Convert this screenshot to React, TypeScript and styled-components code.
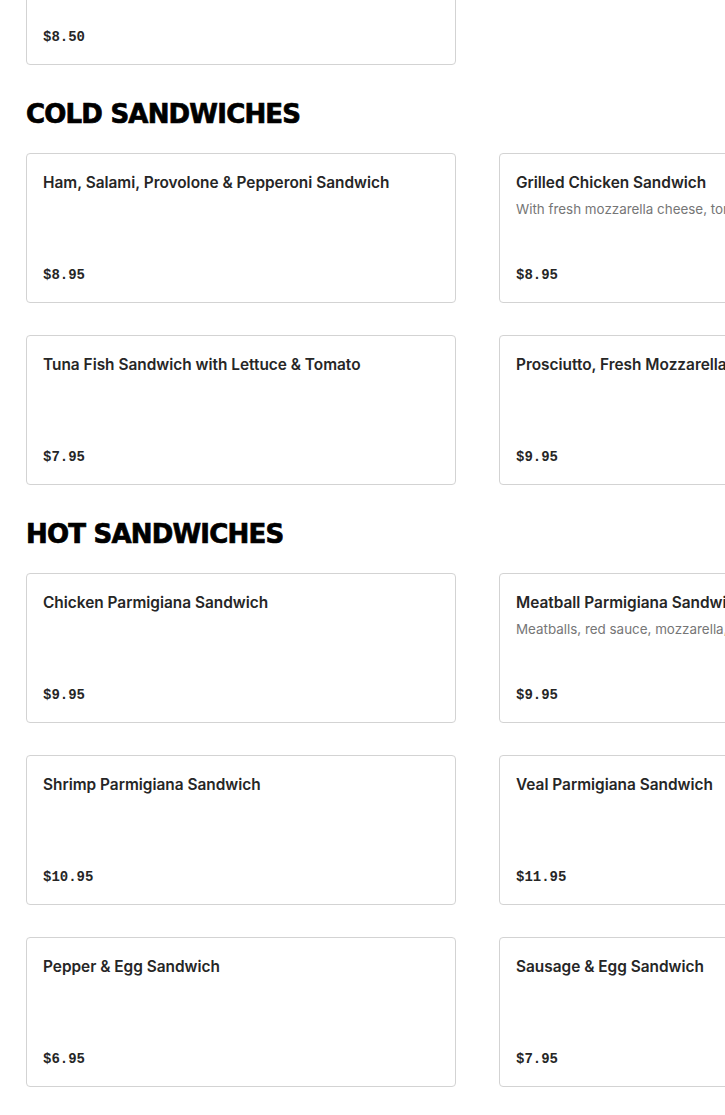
import React from "react";
import styled, { createGlobalStyle } from "styled-components";

interface MenuItem {
  name: string;
  description?: string;
  price: string;
}

interface Section {
  title?: string;
  items: MenuItem[];
}

const GlobalStyle = createGlobalStyle`
  html, body {
    margin: 0;
    padding: 0;
    background: #ffffff;
    overflow: hidden;
  }

  body {
    font-family: Inter, "Noto Sans", "Liberation Sans", sans-serif;
    color: #262626;
  }
`;

const Page = styled.div`
  width: 1000px;
  padding: 0 0 0 26px;
  margin-top: -85px;
`;

const SectionWrapper = styled.section`
  display: flex;
  flex-direction: column;
`;

const Heading = styled.h2`
  margin: 33px 0 23px;
  font-family: "DejaVu Sans", "Liberation Sans", sans-serif;
  font-size: 26px;
  line-height: 32px;
  font-weight: 700;
  letter-spacing: -0.8px;
  -webkit-text-stroke: 0.7px #000000;
  color: #000000;
  text-transform: uppercase;
`;

const Grid = styled.div`
  display: grid;
  grid-template-columns: 430px 430px;
  column-gap: 43px;
  row-gap: 32px;
`;

const Card = styled.div`
  box-sizing: border-box;
  height: 150px;
  display: flex;
  flex-direction: column;
  padding: 18px 16px 17px;
  border: 1px solid #d3d3d3;
  border-radius: 4px;
  background: #ffffff;
  overflow: hidden;
`;

const ItemName = styled.h3`
  margin: 0;
  font-size: 15.4px;
  line-height: 22px;
  font-weight: 600;
  color: #262626;
  white-space: nowrap;
`;

const ItemDescription = styled.p`
  margin: 6px 0 0;
  font-size: 13.4px;
  line-height: 18px;
  color: #767676;
  white-space: nowrap;
`;

const Price = styled.span`
  margin-top: auto;
  font-family: "Liberation Mono", "DejaVu Sans Mono", monospace;
  font-size: 14px;
  line-height: 20px;
  font-weight: 700;
  color: #262626;
`;

const sections: Section[] = [
  {
    items: [
      {
        name: "Eggplant Parmigiana Sandwich",
        price: "$8.50"
      }
    ]
  },
  {
    title: "Cold Sandwiches",
    items: [
      { name: "Ham, Salami, Provolone & Pepperoni Sandwich", price: "$8.95" },
      {
        name: "Grilled Chicken Sandwich",
        description:
          "With fresh mozzarella cheese, tomatoes, roasted peppers & balsamic",
        price: "$8.95"
      },
      { name: "Tuna Fish Sandwich with Lettuce & Tomato", price: "$7.95" },
      {
        name: "Prosciutto, Fresh Mozzarella & Roasted Peppers Sandwich",
        price: "$9.95"
      }
    ]
  },
  {
    title: "Hot Sandwiches",
    items: [
      { name: "Chicken Parmigiana Sandwich", price: "$9.95" },
      {
        name: "Meatball Parmigiana Sandwich",
        description: "Meatballs, red sauce, mozzarella, parmesan",
        price: "$9.95"
      },
      { name: "Shrimp Parmigiana Sandwich", price: "$10.95" },
      { name: "Veal Parmigiana Sandwich", price: "$11.95" },
      { name: "Pepper & Egg Sandwich", price: "$6.95" },
      { name: "Sausage & Egg Sandwich", price: "$7.95" },
      { name: "Potato & Egg Sandwich", price: "$6.95" },
      { name: "Philly Cheese Steak Sandwich", price: "$9.95" }
    ]
  }
];

const MenuCard = ({ item }: { item: MenuItem }) => (
  <Card>
    <ItemName>{item.name}</ItemName>
    {item.description && <ItemDescription>{item.description}</ItemDescription>}
    <Price>{item.price}</Price>
  </Card>
);

const App = () => {
  return (
    <>
      <GlobalStyle />
      <Page>
        {sections.map((section, i) => (
          <SectionWrapper key={section.title || i}>
            {section.title && <Heading>{section.title}</Heading>}
            <Grid>
              {section.items.map(item => (
                <MenuCard key={item.name} item={item} />
              ))}
            </Grid>
          </SectionWrapper>
        ))}
      </Page>
    </>
  );
};

export default App;
